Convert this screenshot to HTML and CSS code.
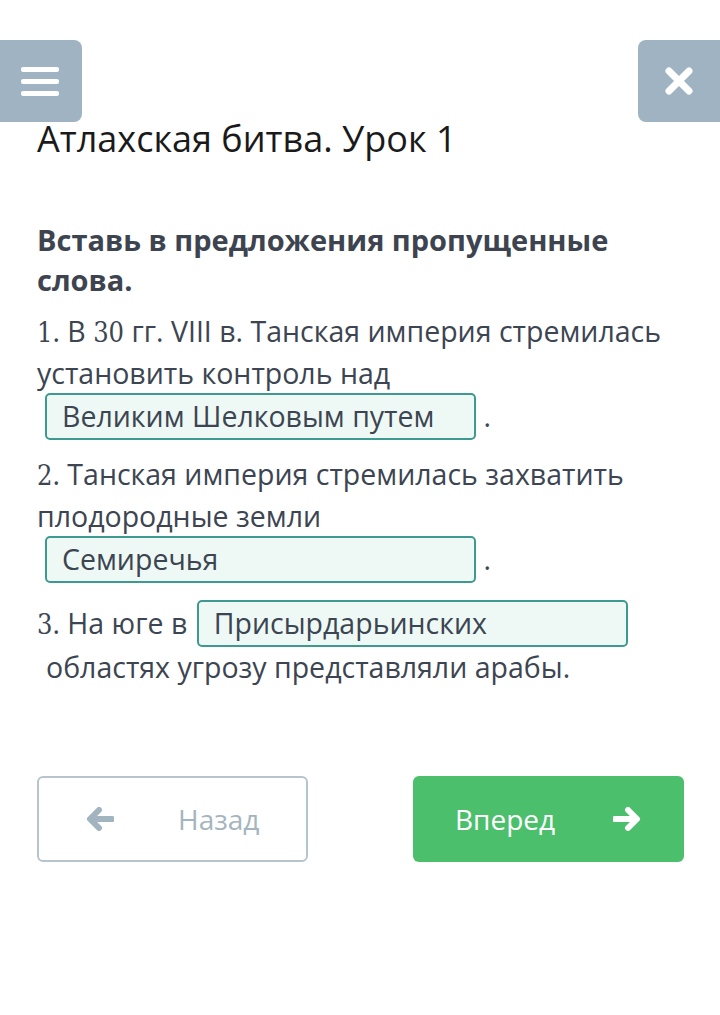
FILE: index.html
```html
<!DOCTYPE html>
<html lang="ru">
<head>
<meta charset="utf-8">
<link rel="stylesheet" href="styles.css">
</head>
<body>
<div class="page">
  <button class="corner corner-left" aria-label="menu">
    <svg width="38" height="32" viewBox="0 0 38 32"><rect x="0" y="2" width="38" height="5" rx="2" fill="#fff"/><rect x="0" y="14" width="38" height="5" rx="2" fill="#fff"/><rect x="0" y="26" width="38" height="5" rx="2" fill="#fff"/></svg>
  </button>
  <button class="corner corner-right" aria-label="close">
    <svg width="30" height="30" viewBox="0 0 30 30"><path d="M5 5 L25 25 M25 5 L5 25" stroke="#fff" stroke-width="7" stroke-linecap="round"/></svg>
  </button>

  <h1 class="title">Атлахская битва. Урок 1</h1>

  <p class="task">Вставь в предложения пропущенные слова.</p>

  <p class="item"><span class="num">1</span>. В <span class="num">30</span> гг. VIII в. Танская империя стремилась установить контроль над <span class="blank">Великим Шелковым путем</span> .</p>

  <p class="item"><span class="num">2</span>. Танская империя стремилась захватить плодородные земли <span class="blank">Семиречья</span> .</p>

  <p class="item item-last"><span class="num">3</span>. На юге в <span class="blank blank-inline">Присырдарьинских</span> <span class="cont">областях угрозу представляли арабы.</span></p>

  <div class="nav">
    <button class="btn btn-back">
      <svg width="28" height="24" viewBox="0 0 28 24"><path d="M26 12 H5 M13 3 L4 12 L13 21" stroke="#a2b4c0" stroke-width="6" fill="none" stroke-linecap="round" stroke-linejoin="round"/></svg>
      <span class="btn-label">Назад</span>
    </button>
    <button class="btn btn-next">
      <span class="btn-label">Вперед</span>
      <svg width="28" height="24" viewBox="0 0 28 24"><path d="M2 12 H23 M15 3 L24 12 L15 21" stroke="#fff" stroke-width="6" fill="none" stroke-linecap="round" stroke-linejoin="round"/></svg>
    </button>
  </div>
</div>
</body>
</html>
```

FILE: styles.css
```css
* { box-sizing: border-box; }
html, body { margin: 0; padding: 0; background: #fff; }
body { font-family: "Open Sans", "Noto Sans", sans-serif; color: #3c4551; }
.page { position: relative; width: 720px; min-height: 1015px; padding: 115px 37px 0 37px; }

.corner {
  position: absolute; top: 40px; width: 82px; height: 82px;
  background: #9fb3c2; border: none; padding: 0;
  display: flex; align-items: center; justify-content: center;
}
.corner-left { left: 0; border-radius: 0 8px 8px 0; padding-right: 3px; }
.corner-right { right: 0; border-radius: 8px 0 0 8px; }

.title { margin: 0; font-weight: 400; font-size: 36px; line-height: 48px; color: #1a1a1a; }

.task { margin: 57px 0 0 0; font-weight: 700; font-size: 29px; line-height: 40px; color: #3d4450; }

.item { margin: 11px 0 0 0; font-size: 28.5px; line-height: 40px; color: #3c4551; }
.item + .item { margin-top: 14px; }
.item-last { margin-top: 17px !important; }
.num { font-family: "DejaVu Serif Condensed", "DejaVu Serif", serif; font-size: 27px; }

.blank {
  display: inline-block; width: 431px; height: 47px; vertical-align: baseline;
  border: 2px solid #3e9a8e; border-radius: 5px; background: #eef9f5;
  padding: 0 0 0 15px; line-height: 43px; color: #3c4551;
  margin: 0 0 0 8px;
}
.blank-inline { margin-left: 2px; }
.cont { margin-left: 9px; }

.nav { display: flex; justify-content: space-between; margin-top: 89px; }
.btn {
  width: 271px; height: 86px; border-radius: 6px;
  display: flex; align-items: center; font-family: "Open Sans", sans-serif; font-size: 28px;
}
.btn-back { background: #fff; border: 2px solid #b7c4cc; color: #a4b5c0; padding-left: 47px; gap: 64px; }
.btn-next { background: #4bbf6b; border: none; color: #fff; padding-left: 42px; gap: 58px; margin-right: -1px; }
```
